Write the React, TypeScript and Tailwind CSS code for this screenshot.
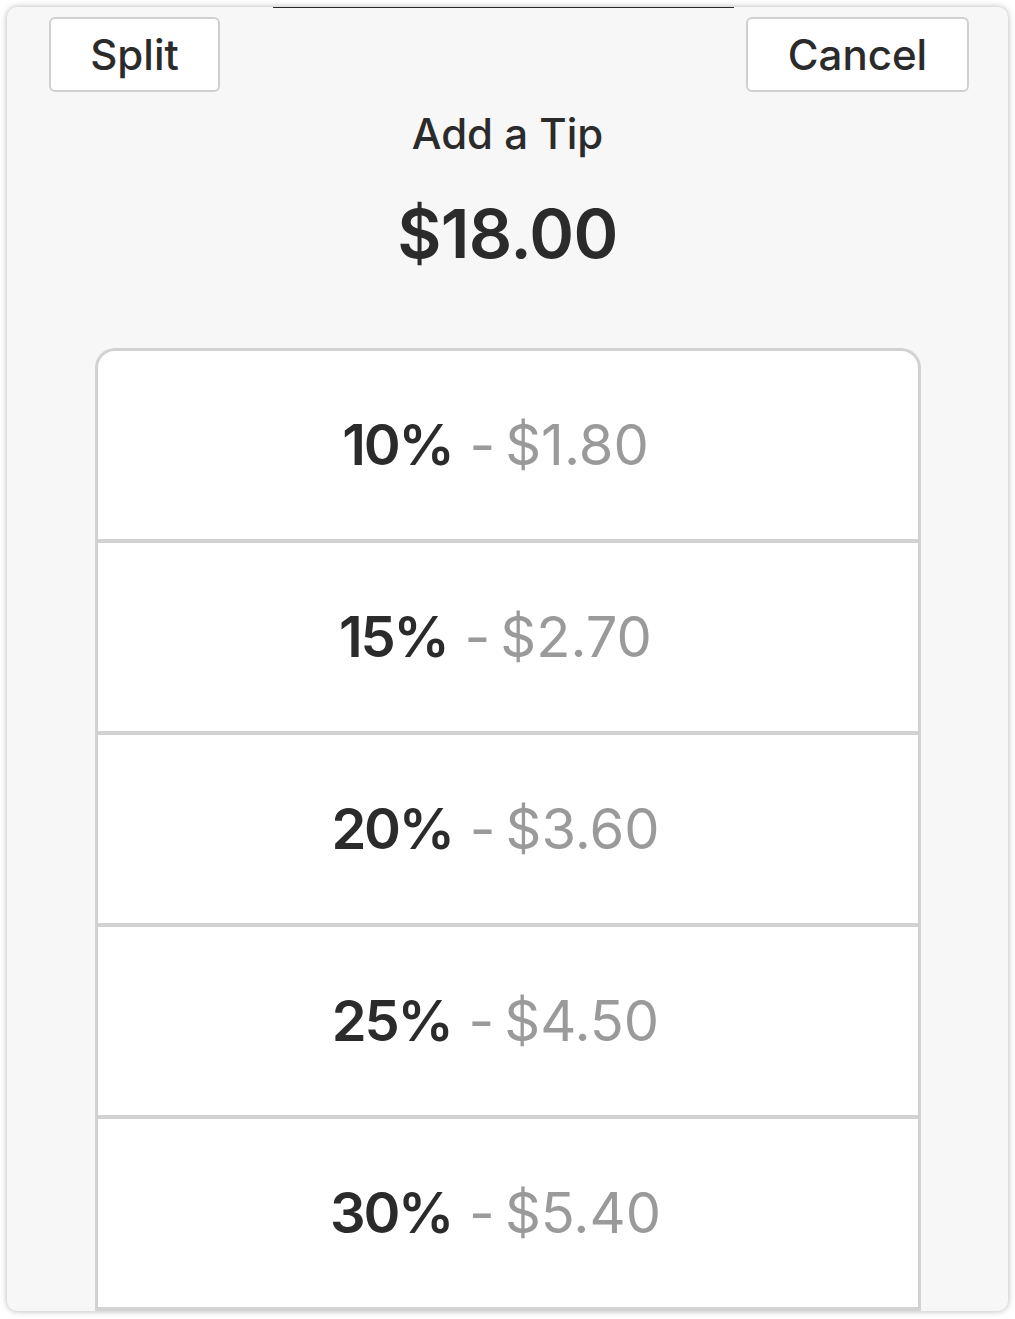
import React from "react";

const tips = [
  { pct: "10%", amt: "$1.80" },
  { pct: "15%", amt: "$2.70" },
  { pct: "20%", amt: "$3.60" },
  { pct: "25%", amt: "$4.50" },
  { pct: "30%", amt: "$5.40" },
];

export default function App() {
  return (
    <div className="min-h-[1319px] bg-white p-[7px] font-['Inter','Liberation_Sans',sans-serif]">
      <div className="flex h-[1304px] flex-col overflow-hidden rounded-[10px] bg-[#f7f7f7] shadow-[0_0_6px_rgba(0,0,0,0.3)]">
        {/* handle line */}
        <div className="ml-[266px] h-px w-[461px] shrink-0 bg-[#2a2a2a]" />

        {/* top buttons */}
        <div className="mt-[9px] flex shrink-0 justify-between pl-[42px] pr-[39px]">
          <button className="flex h-[75px] w-[171px] items-center justify-center rounded-[6px] border-2 border-[#d0d0d0] bg-white text-[42px] font-medium text-[#2b2b2b]">
            Split
          </button>
          <button className="flex h-[75px] w-[223px] items-center justify-center rounded-[6px] border-2 border-[#d0d0d0] bg-white text-[42px] font-medium text-[#2b2b2b]">
            Cancel
          </button>
        </div>

        <h1 className="mt-[21px] text-center text-[42px] font-medium leading-none text-[#2b2b2b]">Add a Tip</h1>
        <div className="mt-[44px] text-center text-[68px] font-semibold leading-none tracking-[-0.01em] text-[#2b2b2b]">$18.00</div>

        {/* tip options */}
        <div className="mx-auto mt-[81px] w-[826px] shrink-0 overflow-hidden rounded-t-[20px] border-x-[3px] border-t-[3px] border-[#d2d2d2] bg-white">
          {tips.map((t) => (
            <div
              key={t.pct}
              className="flex h-[192px] items-center justify-center border-b-4 border-[#d2d2d2] pr-[24px] text-[56px] leading-none"
            >
              <span className="mr-[17px] font-semibold tracking-[-0.04em] text-[#2b2b2b]">{t.pct}</span>
              <span className="mr-[10px] text-[#9a9a9a]">-</span>
              <span className="text-[#9a9a9a]">{t.amt}</span>
            </div>
          ))}
        </div>
      </div>
    </div>
  );
}
